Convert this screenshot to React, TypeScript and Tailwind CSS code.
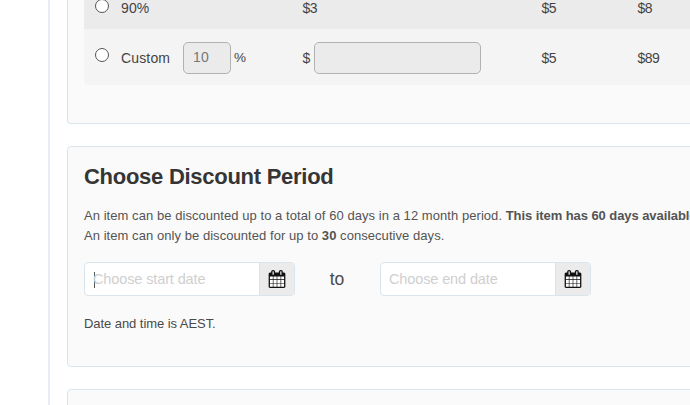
function CalendarIcon() {
  return (
    <svg viewBox="0 0 1792 1792" className="size-[18px] shrink-0 fill-[#111]" aria-hidden="true">
      <path className="fill-white" d="M128 600h1536v1128h-1536z" />
      <path d="M192 1664h288v-288h-288v288zm352 0h320v-288h-320v288zm-352-352h288v-320h-288v320zm352 0h320v-320h-320v320zm-352-384h288v-288h-288v288zm736 736h320v-288h-320v288zm-384-736h320v-288h-320v288zm768 736h288v-288h-288v288zm-384-352h320v-320h-320v320zm-352-864v-288q0-13-9.5-22.5t-22.5-9.5h-64q-13 0-22.5 9.5t-9.5 22.5v288q0 13 9.5 22.5t22.5 9.5h64q13 0 22.5-9.5t9.5-22.5zm736 864h288v-320h-288v320zm-384-384h320v-288h-320v288zm384 0h288v-288h-288v288zm32-480v-288q0-13-9.5-22.5t-22.5-9.5h-64q-13 0-22.5 9.5t-9.5 22.5v288q0 13 9.5 22.5t22.5 9.5h64q13 0 22.5-9.5t9.5-22.5zm384-64v1280q0 52-38 90t-90 38h-1408q-52 0-90-38t-38-90v-1280q0-52 38-90t90-38h128v-96q0-66 47-113t113-47h64q66 0 113 47t47 113v96h384v-96q0-66 47-113t113-47h64q66 0 113 47t47 113v96h128q52 0 90 38t38 90z" />
    </svg>
  );
}

function Radio() {
  return <span className="mb-[5px] size-[14px] shrink-0 rounded-full border border-[#555] bg-white" />;
}

function DateField({ label, focused = false }: { label: string; focused?: boolean }) {
  return (
    <div className="flex h-[34px] w-[211px] shrink-0 overflow-hidden rounded-[4px] border border-[#dae4eb] bg-white">
      <div className="flex w-[174px] items-center pt-px pl-2 text-[14.5px] tracking-[-0.12px] text-[#cfcfcf]">
        {focused && <span className="-mr-[2px] ml-px h-4 w-px bg-[#555]" />}
        <span>{label}</span>
      </div>
      <div className="flex grow items-center justify-center border-l border-[#dae4eb] bg-[#ebebeb]">
        <CalendarIcon />
      </div>
    </div>
  );
}

export default function App() {
  return (
    <div className="h-[405px] w-[690px] overflow-hidden bg-white pl-12 font-['Liberation_Sans',Arial,sans-serif] text-[#4a4a4a]">
      <div className="flex h-[405px] w-[760px] flex-col border-l-2 border-[#e7edf2] pl-[17px]">
        <section className="h-[124px] shrink-0 rounded-b-[4px] border border-t-0 border-[#dae4eb] bg-[#fafafa] pl-4 text-[14px] tracking-[-0.5px] text-[#444]">
          <div className="flex h-[29px] items-start bg-[#ebebeb] pl-[11px]">
            <div className="flex h-[17px] w-[207.5px] items-center text-[14px] tracking-[0.1px]">
              <Radio />
              <span className="ml-3">90%</span>
            </div>
            <span className="w-[239px] leading-[17px]">$3</span>
            <span className="w-24 leading-[17px]">$5</span>
            <span className="leading-[17px]">$8</span>
          </div>
          <div className="flex h-14 items-center rounded-bl-[4px] bg-[#f4f4f4] pt-px pl-[11px]">
            <div className="flex w-[207.5px] items-center text-[14px] tracking-[0.15px]">
              <Radio />
              <span className="ml-3 w-[62px] pt-px">Custom</span>
              <span className="flex h-8 w-12 items-center rounded-[5px] border border-[#b2b2b2] bg-[#ebebeb] pl-[9px] text-[#777]">10</span>
              <span className="ml-[3px] pt-px text-[13.5px]">%</span>
            </div>
            <div className="flex w-[239px] items-center">
              <span className="w-[11.5px] pt-px">$</span>
              <span className="h-8 w-[167px] rounded-[5px] border border-[#b2b2b2] bg-[#ebebeb]" />
            </div>
            <span className="w-24 pt-px">$5</span>
            <span className="pt-px">$89</span>
          </div>
        </section>

        <section className="mt-[22px] h-[221px] shrink-0 rounded-[4px] border border-[#dae4eb] bg-[#fafafa] pt-[15px] pl-4">
          <h2 className="text-[22px] leading-[30px] font-bold tracking-[-0.27px] text-[#353535]">Choose Discount Period</h2>
          <p className="mt-[14px] text-[13px] leading-[19.5px] tracking-[0.055px] whitespace-nowrap text-[#545454]">
            An item can be discounted up to a total of 60 days in a 12 month period.{' '}
            <strong className="tracking-[-0.07px]">This item has 60 days available.</strong>
            <br />
            An item can only be discounted for up to <strong>30</strong> consecutive days.
          </p>
          <div className="mt-[17px] flex items-center">
            <DateField label="Choose start date" focused />
            <span className="w-[85px] pr-px pt-px text-center text-[17.5px]">to</span>
            <DateField label="Choose end date" />
          </div>
          <p className="mt-[18px] text-[13px] leading-5 tracking-[-0.06px]">Date and time is AEST.</p>
        </section>

        <section className="mt-[22px] h-10 shrink-0 rounded-t-[4px] border border-[#dae4eb] bg-[#fafafa]" />
      </div>
    </div>
  );
}
